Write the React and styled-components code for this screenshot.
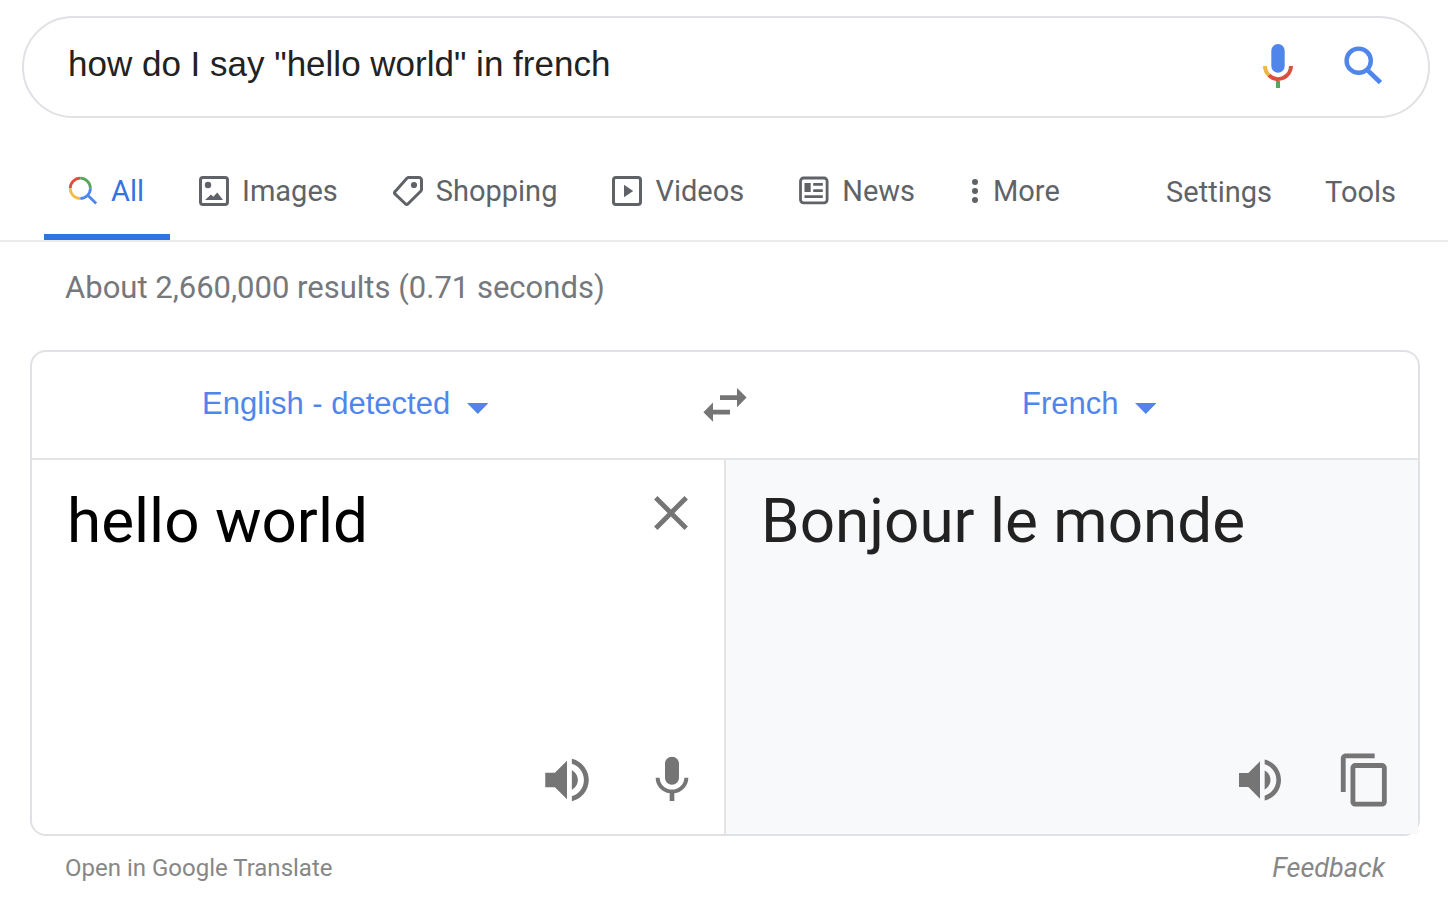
import React, { useState } from "react";
import styled, { createGlobalStyle } from "styled-components";

const sans = '"Liberation Sans", Arial, sans-serif';
const roboto = 'Roboto, "Liberation Sans", sans-serif';
const color = {
  text: "#222222",
  muted: "#5f6368",
  stats: "#75787c",
  faint: "#878787",
  icon: "#757575",
  blue: "#5086ec",
  active: "#3273df",
  line: "#dfe1e5",
  rule: "#e4e4e4",
  output: "#f8f9fb",
};

const GlobalStyle = createGlobalStyle`
  *, *::before, *::after { box-sizing: border-box; }
  body { margin: 0; background: #fff; color: ${color.text}; font-family: ${roboto}; }
  button, input, textarea, select { font: inherit; color: inherit; }
`;

const IconButton = styled.button`
  display: flex;
  flex: none;
  padding: 0;
  border: 0;
  background: none;
  color: ${color.icon};
  cursor: pointer;

  svg { display: block; }
`;

const SearchForm = styled.form`
  display: flex;
  align-items: center;
  min-height: 102px;
  margin: 16px 18px 0 22px;
  padding: 0 46px 2px 44px;
  border: 2px solid ${color.line};
  border-radius: 51px;
`;

const SearchInput = styled.input`
  flex: 1;
  min-width: 0;
  padding: 0 0 4px;
  border: 0;
  outline: 0;
  background: none;
  font-family: ${sans};
  font-size: 35px;
  line-height: 40px;
`;

const SearchActions = styled.div`
  display: flex;
  align-items: center;
  gap: 51px;
`;

const Nav = styled.nav`
  display: flex;
  justify-content: space-between;
  margin-top: 29px;
  padding: 0 52px 0 44px;
  border-bottom: 2px solid #ebebeb;
  font-size: 29px;
  line-height: 34px;
`;

const TabList = styled.div`
  display: flex;
  gap: 5px;
`;

const Tab = styled.a`
  display: flex;
  align-items: center;
  gap: 13px;
  height: 93px;
  padding: 0 26px 0 24px;
  border-bottom: 6px solid ${(p) => (p.$active ? color.active : "transparent")};
  color: ${(p) => (p.$active ? color.active : color.muted)};
  text-decoration: none;
  white-space: nowrap;

  svg { display: block; flex: none; }
`;

const NavTools = styled.div`
  display: flex;
  align-items: center;
  gap: 53px;
  padding-bottom: 4px;
`;

const NavLink = styled.a`
  color: ${color.muted};
  text-decoration: none;
`;

const Stats = styled.p`
  margin: 28px 65px 44px;
  color: ${color.stats};
  font-size: 31px;
  line-height: 36px;
`;

const Card = styled.section`
  margin: 0 28px 0 30px;
  border: 2px solid ${color.line};
  border-radius: 16px;
`;

const LanguageBar = styled.div`
  display: grid;
  grid-template-columns: 1fr 72px 1fr;
  align-items: center;
  height: 108px;
  border-bottom: 2px solid ${color.rule};
`;

const LanguagePicker = styled.label`
  display: flex;
  align-items: baseline;
  justify-content: center;
  gap: 16px;
  padding: 0 ${(p) => (p.$source ? "30px" : "0")} 2px 0;
  color: ${color.blue};
`;

const LanguageSelect = styled.select`
  appearance: none;
  padding: 0;
  border: 0;
  outline: 0;
  background: none;
  font-family: ${sans};
  font-size: 31px;
  line-height: 36px;
  cursor: pointer;
`;

const SwapButton = styled(IconButton)`
  justify-content: center;
`;

const Panels = styled.div`
  display: grid;
  grid-template-columns: 1fr 1fr;
  gap: 2px;
  min-height: 374px;
  border-bottom-left-radius: 14px;
  background: ${color.rule};
`;

const Panel = styled.div`
  display: flex;
  flex-direction: column;
  justify-content: space-between;
  min-width: 0;
  padding: 24px 24px 26px 35px;
  border-bottom-left-radius: ${(p) => (p.$output ? "0" : "14px")};
  background: ${(p) => (p.$output ? color.output : "#fff")};
`;

const PanelTop = styled.div`
  display: flex;
  align-items: flex-start;
`;

const SourceText = styled.textarea`
  flex: 1;
  min-width: 0;
  height: 74px;
  padding: 0;
  border: 0;
  outline: 0;
  resize: none;
  overflow: hidden;
  background: none;
  color: #000;
  font-size: 62px;
  line-height: 74px;
`;

const Translation = styled.output`
  font-size: 62px;
  line-height: 74px;
`;

const PanelTools = styled.div`
  display: flex;
  align-items: center;
  justify-content: flex-end;
  gap: 48px;
  height: 56px;
`;

const CardFooter = styled.footer`
  display: flex;
  align-items: center;
  justify-content: space-between;
  margin: 16px 63px 16px 65px;
  line-height: 32px;
`;

const FooterLink = styled.a`
  color: ${color.faint};
  font-size: ${(p) => (p.$feedback ? "27px" : "24px")};
  font-style: ${(p) => (p.$feedback ? "italic" : "normal")};
  text-decoration: none;
`;

function MaterialIcon({ d, size = 56 }) {
  return (
    <svg width={size} height={size} viewBox="0 0 24 24" fill="currentColor" aria-hidden="true">
      <path d={d} />
    </svg>
  );
}

const paths = {
  close: "M19 6.41 17.59 5 12 10.59 6.41 5 5 6.41 10.59 12 5 17.59 6.41 19 12 13.41 17.59 19 19 17.59 13.41 12z",
  speaker:
    "M3 9v6h4l5 5V4L7 9H3zm13.5 3c0-1.77-1.02-3.29-2.5-4.03v8.05c1.48-.73 2.5-2.25 2.5-4.02zM14 3.23v2.06c2.89.86 5 3.54 5 6.71s-2.11 5.85-5 6.71v2.06c4.01-.91 7-4.49 7-8.77s-2.99-7.86-7-8.77z",
  mic: "M12 14c1.66 0 2.99-1.34 2.99-3L15 5c0-1.66-1.34-3-3-3S9 3.34 9 5v6c0 1.66 1.34 3 3 3zm5.3-3c0 3-2.54 5.1-5.3 5.1S6.7 14 6.7 11H5c0 3.41 2.72 6.23 6 6.72V21h2v-3.28c3.28-.48 6-3.3 6-6.72h-1.7z",
  copy: "M16 1H4c-1.1 0-2 .9-2 2v14h2V3h12V1zm3 4H8c-1.1 0-2 .9-2 2v14c0 1.1.9 2 2 2h11c1.1 0 2-.9 2-2V7c0-1.1-.9-2-2-2zm0 16H8V7h11v14z",
};

const ColorMic = () => (
  <svg width="30" height="44" viewBox="0 0 30 44" fill="none" aria-hidden="true">
    <rect x="8.3" y="0" width="13.4" height="28.7" rx="6.7" fill="#5086ec" />
    <path d="M2 22a13 13 0 0 0 3.8 9.2" stroke="#eeb83d" strokeWidth="4" />
    <path d="M5.8 31.2A13 13 0 0 0 28 22" stroke="#d9503f" strokeWidth="4" />
    <path d="M15 37v7" stroke="#58a55c" strokeWidth="4" />
  </svg>
);

const SearchGlass = () => (
  <svg width="38" height="40" viewBox="0 0 38 40" fill="none" stroke="#5086ec" aria-hidden="true">
    <circle cx="14.7" cy="14.7" r="12.1" strokeWidth="4.4" />
    <path d="M24 24.6 36.4 36.6" strokeWidth="4.8" />
  </svg>
);

const AllIcon = () => (
  <svg width="30" height="30" viewBox="0 0 30 30" fill="none" strokeWidth="2.8" aria-hidden="true">
    <path d="M2.2 12.3A10.1 10.1 0 0 1 12.3 2.2" stroke="#d9503f" />
    <path d="M12.3 2.2A10.1 10.1 0 0 1 22.4 12.3" stroke="#58a55c" />
    <path d="M2.2 12.3A10.1 10.1 0 0 0 12.3 22.4" stroke="#f1bd42" />
    <path d="M12.3 22.4A10.1 10.1 0 0 0 22.4 12.3M19 18.600l9.2 8.8" stroke="#5086ec" />
  </svg>
);

const ImagesIcon = () => (
  <svg width="30" height="30" viewBox="0 0 30 30" fill="none" aria-hidden="true">
    <rect x="1.5" y="1.5" width="27" height="27" rx="2.5" stroke="currentColor" strokeWidth="3" />
    <circle cx="9" cy="9" r="3.2" fill="currentColor" />
    <path d="M6 24l6-5.5 2.3 2.2 4-4.2 5.7 7.5z" fill="currentColor" />
  </svg>
);

const ShoppingIcon = () => (
  <svg width="30" height="30" viewBox="0 0 30 30" fill="none" aria-hidden="true">
    <path
      d="M15.8 1.5H26A2.5 2.5 0 0 1 28.5 4v9.4c0 .8-.3 1.4-.8 1.9L15.1 27.7a2 2 0 0 1-2.8 0L2.2 18.2a2 2 0 0 1 0-2.8L13.9 2.3c.5-.5 1.1-.8 1.9-.8z"
      stroke="currentColor"
      strokeWidth="3"
    />
    <circle cx="21" cy="9" r="3.1" fill="currentColor" />
  </svg>
);

const VideosIcon = () => (
  <svg width="30" height="30" viewBox="0 0 30 30" fill="none" aria-hidden="true">
    <rect x="1.5" y="1.5" width="27" height="27" rx="2.5" stroke="currentColor" strokeWidth="3" />
    <path d="M12 8.8v12.4l9.2-6.2z" fill="currentColor" />
  </svg>
);

const NewsIcon = () => (
  <svg width="30" height="30" viewBox="0 0 30 30" fill="none" aria-hidden="true">
    <rect x="1.5" y="2" width="26.6" height="24.8" rx="3" stroke="currentColor" strokeWidth="2.8" />
    <path
      d="M5.500 7h6.200v9H5.500zM14.200 7h9.600v2.800h-9.600zM14.200 13.200h9.600v2.800h-9.600zM5.500 19.200h18.300v2.800H5.500z"
      fill="currentColor"
    />
  </svg>
);

const MoreIcon = () => (
  <svg width="10" height="30" viewBox="0 0 10 30" fill="currentColor" aria-hidden="true">
    <circle cx="5" cy="6" r="3" />
    <circle cx="5" cy="15" r="3" />
    <circle cx="5" cy="24" r="3" />
  </svg>
);

const Caret = () => (
  <svg width="22" height="11" viewBox="0 0 22 11" fill="currentColor" aria-hidden="true">
    <path d="M0 0h21.500L10.800 11z" />
  </svg>
);

const SwapIcon = () => (
  <svg width="44" height="34" viewBox="0 0 44 34" fill="currentColor" aria-hidden="true">
    <path d="M17 7.2h17V0l9.6 9.6L34 19.200v-7.200H17zM27 21.800H10v-7.200L.4 24.200 10 33.800v-7.200h17z" />
  </svg>
);

const tabs = [
  { label: "All", Icon: AllIcon },
  { label: "Images", Icon: ImagesIcon },
  { label: "Shopping", Icon: ShoppingIcon },
  { label: "Videos", Icon: VideosIcon },
  { label: "News", Icon: NewsIcon },
  { label: "More", Icon: MoreIcon },
];

export default function App() {
  const [query, setQuery] = useState('how do I say "hello world" in french');
  const [source, setSource] = useState("hello world");

  return (
    <>
      <GlobalStyle />
      <header>
        <SearchForm role="search" onSubmit={(e) => e.preventDefault()}>
          <SearchInput
            type="text"
            aria-label="Search"
            value={query}
            onChange={(e) => setQuery(e.target.value)}
          />
          <SearchActions>
            <IconButton type="button" aria-label="Search by voice">
              <ColorMic />
            </IconButton>
            <IconButton type="submit" aria-label="Search">
              <SearchGlass />
            </IconButton>
          </SearchActions>
        </SearchForm>
        <Nav>
          <TabList>
            {tabs.map(({ label, Icon }, i) => (
              <Tab key={label} href="#" $active={i === 0} aria-current={i === 0 ? "page" : undefined}>
                <Icon />
                {label}
              </Tab>
            ))}
          </TabList>
          <NavTools>
            <NavLink href="#">Settings</NavLink>
            <NavLink href="#">Tools</NavLink>
          </NavTools>
        </Nav>
      </header>
      <main>
        <Stats>About 2,660,000 results (0.71 seconds)</Stats>
        <Card>
          <LanguageBar>
            <LanguagePicker $source>
              <LanguageSelect aria-label="Source language">
                <option>English - detected</option>
              </LanguageSelect>
              <Caret />
            </LanguagePicker>
            <SwapButton type="button" aria-label="Swap languages">
              <SwapIcon />
            </SwapButton>
            <LanguagePicker>
              <LanguageSelect aria-label="Target language">
                <option>French</option>
              </LanguageSelect>
              <Caret />
            </LanguagePicker>
          </LanguageBar>
          <Panels>
            <Panel>
              <PanelTop>
                <SourceText
                  rows={1}
                  aria-label="Source text"
                  spellCheck={false}
                  value={source}
                  onChange={(e) => setSource(e.target.value)}
                />
                <IconButton type="button" aria-label="Clear text" onClick={() => setSource("")}>
                  <MaterialIcon d={paths.close} size={58} />
                </IconButton>
              </PanelTop>
              <PanelTools>
                <IconButton type="button" aria-label="Listen to source">
                  <MaterialIcon d={paths.speaker} size={58} />
                </IconButton>
                <IconButton type="button" aria-label="Speak">
                  <MaterialIcon d={paths.mic} />
                </IconButton>
              </PanelTools>
            </Panel>
            <Panel $output>
              <Translation>Bonjour le monde</Translation>
              <PanelTools>
                <IconButton type="button" aria-label="Listen to translation">
                  <MaterialIcon d={paths.speaker} />
                </IconButton>
                <IconButton type="button" aria-label="Copy translation">
                  <MaterialIcon d={paths.copy} size={58} />
                </IconButton>
              </PanelTools>
            </Panel>
          </Panels>
        </Card>
        <CardFooter>
          <FooterLink href="#">Open in Google Translate</FooterLink>
          <FooterLink href="#" $feedback>
            Feedback
          </FooterLink>
        </CardFooter>
      </main>
    </>
  );
}
